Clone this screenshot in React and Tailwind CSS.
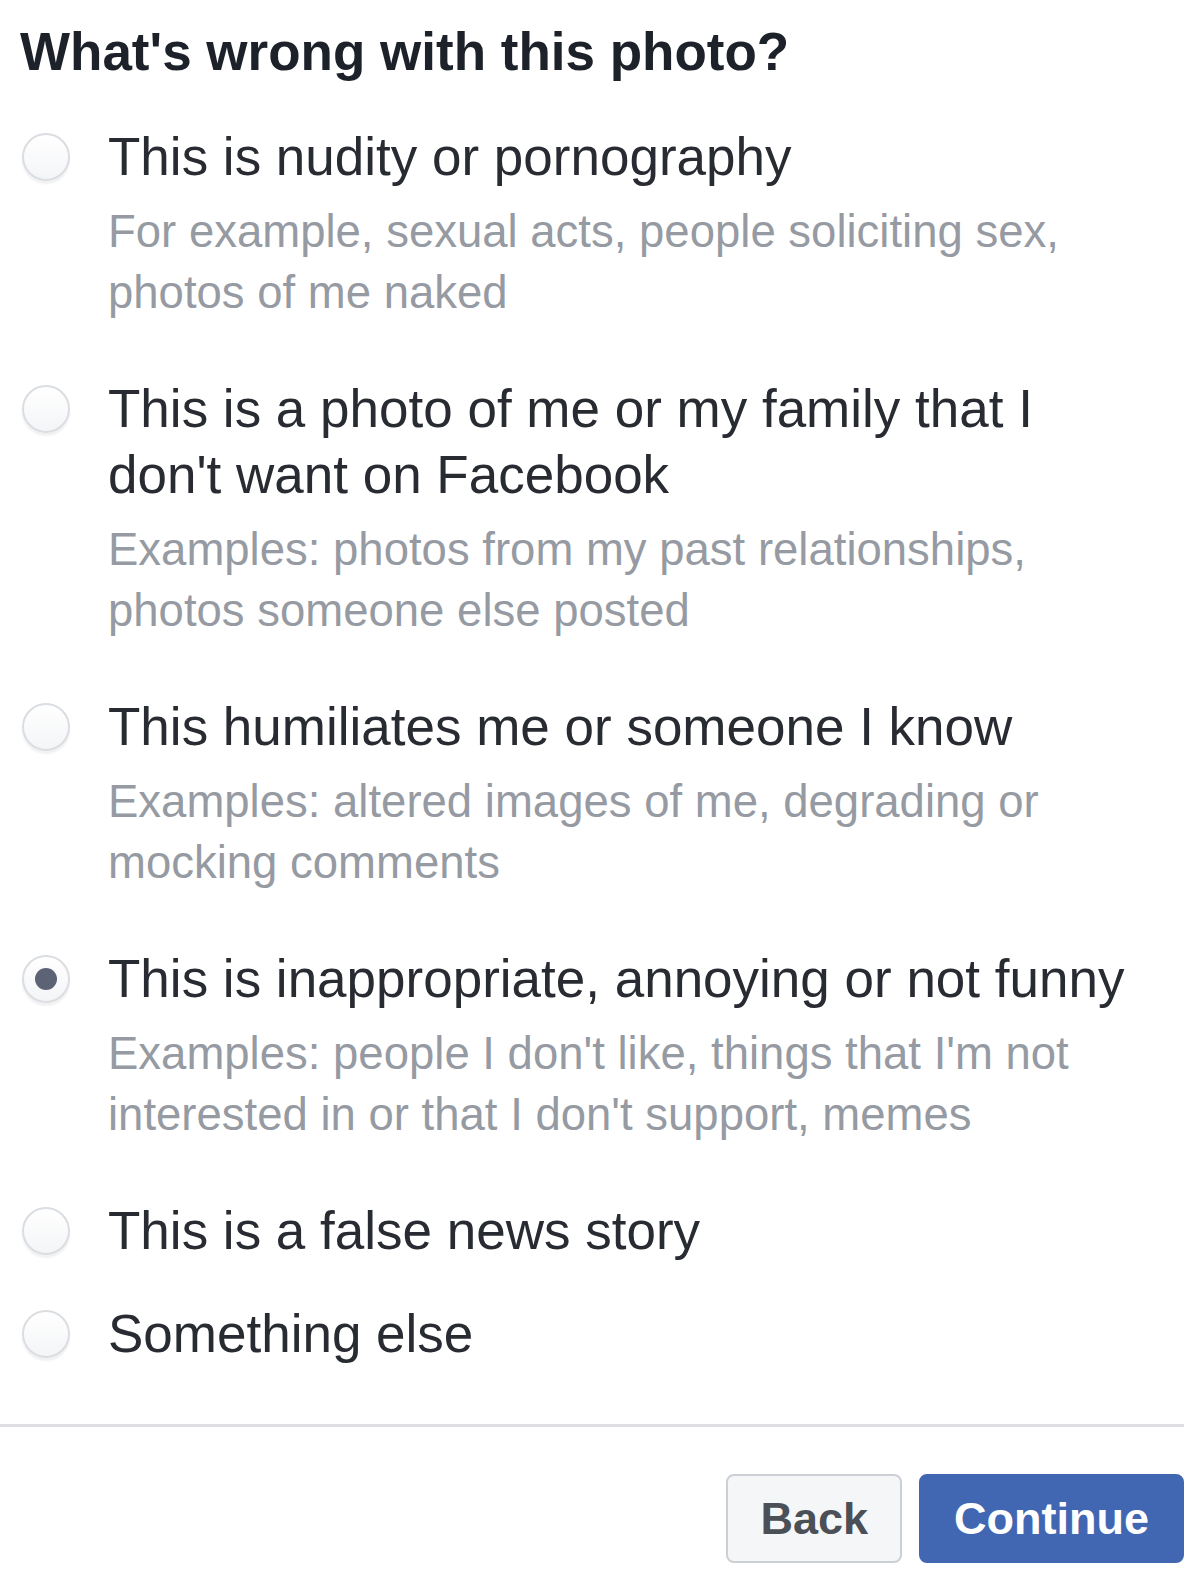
import React, { useState } from 'react';

const options = [
  {
    id: 'nudity',
    label: 'This is nudity or pornography',
    desc: 'For example, sexual acts, people soliciting sex, photos of me naked',
    space: 'mb-[53px]',
  },
  {
    id: 'family',
    label: "This is a photo of me or my family that I don't want on Facebook",
    desc: 'Examples: photos from my past relationships, photos someone else posted',
    space: 'mb-[53px]',
  },
  {
    id: 'humiliates',
    label: 'This humiliates me or someone I know',
    desc: 'Examples: altered images of me, degrading or mocking comments',
    space: 'mb-[53px]',
  },
  {
    id: 'inappropriate',
    label: 'This is inappropriate, annoying or not funny',
    desc: "Examples: people I don't like, things that I'm not interested in or that I don't support, memes",
    space: 'mb-[53px]',
  },
  {
    id: 'false-news',
    label: 'This is a false news story',
    space: 'mb-[37px]',
  },
  {
    id: 'other',
    label: 'Something else',
    space: '',
  },
];

const Radio = ({ checked }) => (
  <div className="mt-[9px] ml-[2px] w-[48px] h-[48px] shrink-0 rounded-full border-2 border-[#dadde1] bg-gradient-to-b from-white to-[#f4f5f7] shadow-[0_3px_2px_rgba(0,0,0,0.06)] flex items-center justify-center">
    {checked && <div className="w-[22px] h-[22px] rounded-full bg-[#5b6375]" />}
  </div>
);

const App = () => {
  const [selected, setSelected] = useState('inappropriate');

  return (
    <div className="w-[1200px] h-[1584px] bg-white pr-[16px] pt-[20px] font-['Liberation_Sans',Arial,sans-serif]">
      <div className="pl-[20px]">
        <h2 className="text-[53px] leading-[64px] font-bold text-[#1d2129]">What's wrong with this photo?</h2>

        {/* Report options */}
        <div className="mt-[40px] flex flex-col">
          {options.map((opt) => (
            <div
              key={opt.id}
              className={`flex cursor-pointer ${opt.space}`}
              onClick={() => setSelected(opt.id)}
            >
              <Radio checked={selected === opt.id} />
              <div className="ml-[38px] w-[1040px]">
                <div className="text-[53px] leading-[66px] text-[#282b31]">{opt.label}</div>
                {opt.desc && (
                  <div className="mt-[11px] text-[45.5px] leading-[61px] text-[#969aa2]">{opt.desc}</div>
                )}
              </div>
            </div>
          ))}
        </div>
      </div>

      <div className="mt-[57px] h-[3px] bg-[#dddfe2]" />

      <div className="mt-[47px] flex justify-end gap-[17px]">
        <button className="h-[89px] px-[32px] rounded-[8px] border-2 border-[#ccd0d5] bg-[#f5f6f7] text-[45px] font-bold text-[#4b4f56]">
          Back
        </button>
        <button className="h-[89px] px-[33px] rounded-[8px] border-2 border-[#4267b2] bg-[#4267b2] text-[45px] font-bold text-white">
          Continue
        </button>
      </div>
    </div>
  );
};

export default App;
